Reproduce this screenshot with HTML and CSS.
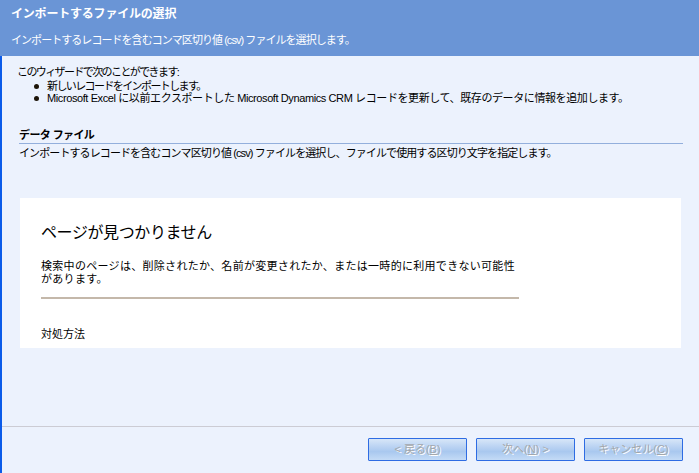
FILE: index.html
```html
<!DOCTYPE html>
<html lang="ja">
<head>
<meta charset="utf-8">
<title>インポートするファイルの選択</title>
<link rel="stylesheet" href="styles.css">
</head>
<body>
<div class="wizard">
  <header class="header">
    <div class="title">インポートするファイルの選択</div>
    <div class="subtitle">インポートするレコードを含むコンマ区切り値 (csv) ファイルを選択します。</div>
  </header>
  <div class="main">
    <div class="content">
      <p class="intro">このウィザードで次のことができます:</p>
      <ul class="bullets">
        <li class="b1">新しいレコードをインポートします。</li>
        <li class="b2">Microsoft Excel に以前エクスポートした Microsoft Dynamics CRM レコードを更新して、既存のデータに情報を追加します。</li>
      </ul>
      <h2 class="section-title">データ ファイル</h2>
      <p class="section-desc">インポートするレコードを含むコンマ区切り値 (csv) ファイルを選択し、ファイルで使用する区切り文字を指定します。</p>
      <div class="frame">
        <h1 class="err-title">ページが見つかりません</h1>
        <p class="err-text">検索中のページは、削除されたか、名前が変更されたか、または一時的に利用できない可能性<br>があります。</p>
        <hr class="err-rule">
        <h3 class="err-sub">対処方法</h3>
      </div>
    </div>
    <footer class="footer">
      <button class="btn" disabled>&lt; 戻る(<u>B</u>)</button>
      <button class="btn" disabled>次へ(<u>N</u>) &gt;</button>
      <button class="btn" disabled>キャンセル(<u>C</u>)</button>
    </footer>
  </div>
</div>
</body>
</html>
```
FILE: styles.css
```css
* { box-sizing: border-box; }
html, body { margin: 0; padding: 0; }
body {
  width: 699px;
  height: 473px;
  overflow: hidden;
  background: #ecf2fd;
  font-family: "Liberation Sans", "Noto Sans CJK JP", sans-serif;
  font-size: 11px;
  color: #000;
}
.wizard {
  display: flex;
  flex-direction: column;
  height: 473px;
}
.header {
  height: 56px;
  background: #6a95d6;
  color: #fff;
  padding-left: 11px;
}
.title {
  height: 28px;
  line-height: 28px;
  font-size: 12px;
  font-weight: bold;
  letter-spacing: -0.2px;
}
.subtitle {
  line-height: 24px;
  letter-spacing: -0.95px;
}
.main {
  flex: 1;
  display: flex;
  flex-direction: column;
  border-left: 2px solid #0b5be9;
}
.content {
  flex: 1;
  padding-left: 15px;
}
.intro {
  margin: 10px 0 0;
  line-height: 12px;
  letter-spacing: -1.6px;
}
.bullets {
  list-style: none;
  margin: 2px 0 0;
  padding: 0 0 0 30px;
}
.bullets li {
  position: relative;
  line-height: 12px;
}
.bullets .b1 { letter-spacing: -1.6px; }
.bullets .b2 { letter-spacing: -0.4px; }
.bullets li::before {
  content: "";
  position: absolute;
  left: -13px;
  top: 4px;
  width: 5px;
  height: 5px;
  border-radius: 50%;
  background: #1c1408;
}
.section-title {
  margin: 24px 16px 0 2px;
  font-size: 11px;
  font-weight: bold;
  line-height: 14px;
  padding-bottom: 1px;
  letter-spacing: -0.6px;
  border-bottom: 1px solid #93afdc;
}
.section-desc {
  margin: 3px 0 0 2px;
  line-height: 12px;
  letter-spacing: -0.9px;
}
.frame {
  margin: 39px 0 0 3px;
  width: 661px;
  height: 150px;
  overflow: hidden;
  background: #fff;
  padding: 25px 0 0 21px;
}
.err-title {
  margin: 0;
  font-size: 16px;
  font-weight: normal;
  line-height: 20px;
  letter-spacing: -0.4px;
}
.err-text {
  margin: 17px 0 0;
  line-height: 13px;
  letter-spacing: 0.3px;
}
.err-rule {
  margin: 11px 0 0;
  width: 478px;
  border: 0;
  height: 2px;
  background: #c4b8aa;
}
.err-sub {
  margin: 28px 0 0;
  font-size: 11px;
  font-weight: normal;
  line-height: 14px;
}
.footer {
  height: 47px;
  border-top: 1px solid #ccccd4;
  display: flex;
  justify-content: flex-end;
  gap: 9px;
  padding: 11px 16px 0 0;
}
.btn {
  width: 99px;
  height: 23px;
  border: 1px solid #2e6ce3;
  border-radius: 1px;
  background: linear-gradient(#d7e6f8 0%, #bcd4f3 35%, #a9c8ef 60%, #c4dbf6 100%);
  font-family: "Liberation Sans", "Noto Sans CJK JP", sans-serif;
  font-size: 11px;
  letter-spacing: 0;
  color: #a3a7ad;
  text-shadow: 1px 1px 0 #ffffff;
  padding: 0;
  line-height: 21px;
}
.btn u { text-decoration: underline; }
```
